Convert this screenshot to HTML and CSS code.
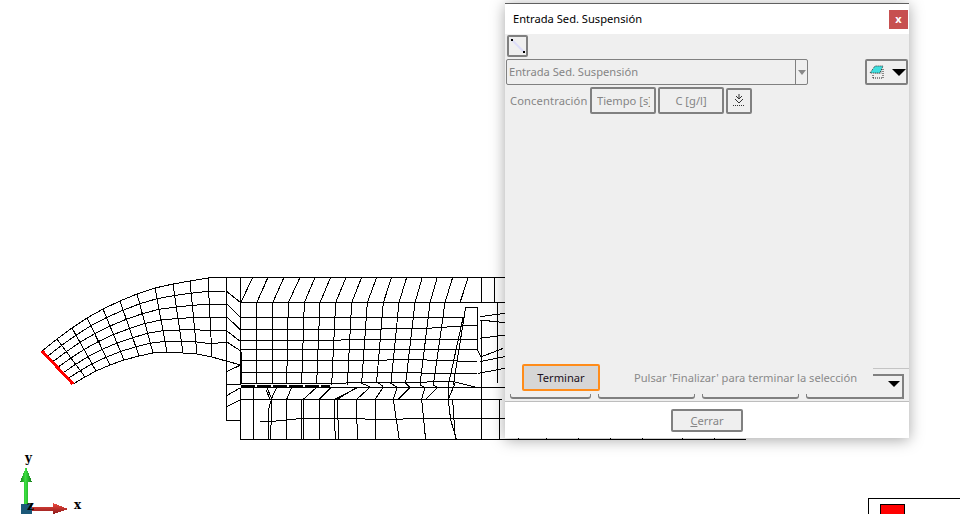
FILE: index.html
```html
<!DOCTYPE html>
<html lang="en">

<head>
    <meta charset="UTF-8">
    <title>Entrada Sed. Suspensión</title>
    <link rel="stylesheet" href="styles.css">
</head>

<body>
    <!-- Mesh viewport -->
    <svg class="viewport" width="960" height="514" viewBox="0 0 960 514">
        <defs>
            <linearGradient id="greenShade" x1="0" y1="0" x2="1" y2="0">
                <stop offset="0" stop-color="#127a18" />
                <stop offset=".45" stop-color="#3be03f" />
                <stop offset="1" stop-color="#127a18" />
            </linearGradient>
            <linearGradient id="redShade" x1="0" y1="0" x2="0" y2="1">
                <stop offset="0" stop-color="#f04a40" />
                <stop offset="1" stop-color="#8c1a1a" />
            </linearGradient>
        </defs>

        <!-- Curved inlet -->
        <g class="mesh">
            <path d="M42 351L57 339 72 328 87 318 103 309 120 301 137 294 155 288 173 284 190 281 208 278 227 277" />
            <path d="M47.2 356.5L61.7 345.3 76 335.2 90.8 325.8 106.5 317.5 123.2 310.2 139.7 303.8 157 298.7 174.7 295.5 191.2 293.2 208.7 291.2 226.5 291" />
            <path d="M52.3 362L66.3 351.7 80 342.3 94.7 333.7 110 326 126.3 319.3 142.3 313.7 159 309.3 176.3 307 192.3 305.3 209.3 304.3 226.5 304.5" />
            <path d="M57.5 367.5L71 358 84 349.5 98.5 341.5 113.5 334.5 129.5 328.5 145 323.5 161 320 178 318.5 193.5 317.5 210 317.5 226.5 317" />
            <path d="M62.7 373L75.7 364.3 88 356.7 102.3 349.3 117 343 132.7 337.7 147.7 333.3 163 330.7 179.7 330 194.7 329.7 210.7 330.7 226 331" />
            <path d="M67.8 378.5L80.3 370.7 92 363.8 106.2 357.2 120.5 351.5 135.8 346.8 150.3 343.2 165 341.3 181.3 341.5 195.8 341.8 211.3 343.8 226 342" />
            <path d="M73 384L85 377 96 371 110 365 124 360 139 356 153 353 167 352 183 353 197 354 212 357 226 361 241 365" />
            <path d="M57 339L85 377M72 328L96 371M87 318L110 365M103 309L124 360M120 301L139 356M137 294L153 353M155 288L167 352M173 284L183 353M190 281L197 354M208 278L212 357" />
        </g>
        <path class="inlet-edge" d="M42 351L73 384" />

        <!-- Left transition -->
        <g class="mesh">
            <path d="M226 277V420H240M240 388V440M253 388V440" />
            <path d="M227 291.7L240.7 302.7M227 304L240.7 317.7M227 317L240.7 330M227 331L240.7 341.7M227 342L240.7 351" />
            <path d="M226 372L240.7 365M226 384H240.7M226 396L240 388M226 407L240 400" />
            <path d="M240.7 302.7L253 277M256.7 302.7L268 277M240.7 277V384M256.7 302.7V384" />
            <path d="M240 399H272M266 390L270 399" />
        </g>
        <path class="mesh-heavy" d="M241 352V384" />
        <path class="mesh-heavy dashed" d="M241 386H330" />

        <!-- Main channel -->
        <g class="mesh" transform="translate(260 270) scale(.3333)">
            <path d="M-102 22H750M-58 98H735M-58 143H610M-58 180H170L500 175 655 165M-58 212H170L320 208 490 208 650 208" />
            <path d="M-58 240H320L450 240 650 240M-58 273H300L440 268 650 275M-58 308H300L650 310M-58 340H170L360 338 580 335 650 352M-58 352H735M-58 388H725M0 453L30 455 80 450 130 445 400 448 490 445 735 445M-58 510H735" />
            <path d="M0 75L25 22M38 98L72 22M85 98L120 22M133 98L165 22M180 98L212 22M227 98L258 22M275 98L305 22M322 98L350 22M370 98L395 22M417 98L440 22M465 98L487 22M510 98L532 22M555 98L578 22M600 98L625 22M665 22V98M705 22V98" />
            <path d="M38 98V340M85 98L80 340M133 98L125 340M180 98L170 340M227 98L215 345M275 98L262 345M322 98L305 340L330 350M370 98L350 335 370 350M417 98L393 340 412 352M465 98L437 340 450 352M510 98L480 345 495 352M555 98L520 345 533 352" />
            <path d="M610 140L565 345V388M617 112L580 345M617 112H652V240L665 265M665 150V510M712 100V340M660 140L735 130M660 150L735 158M660 205L735 195M665 260L730 235M655 310L735 295M660 275L735 260" />
            <path d="M20 352L35 385 50 352M35 385L25 420V510M35 385L32 510M80 388L95 352M130 388L170 352M178 388L213 352M225 388L295 352M232 388L290 352M290 388L330 352M345 388L370 352M400 388L412 352M415 388L450 352M485 388L495 352M497 388L533 352M565 388L585 340" />
            <path d="M80 388V510M125 388V510M132 388V510M178 388V510M222 388L226 510M232 388L236 510M288 388L293 510M345 388L348 510M400 388L418 510M485 388L497 510M565 388L572 450 590 510M578 388L586 510M720 388V510" />
        </g>

        <!-- Bottom edge left showing under the dialog -->
        <g class="mesh">
            <path d="M505 439.5H746M518 436V439M546 436V439M578 436V439M610 436V439M642 436V439M682 436V439M714 436V439" />
        </g>

        <!-- Axis triad -->
        <path d="M24 482H20L26 467 32 482H28V505H24Z" fill="url(#greenShade)" />
        <path d="M30 507H53V503L68 509 53 514V511H30Z" fill="url(#redShade)" />
        <rect class="axis-blue" x="21" y="504" width="11" height="10" />
        <text class="axis-label" x="25" y="462">y</text>
        <text class="axis-label" x="27" y="510">z</text>
        <text class="axis-label" x="74" y="509">x</text>

        <!-- Legend box -->
        <path class="legend-box" d="M868.5 514V498.5H960" />
        <rect class="legend-swatch" x="880.5" y="504.5" width="24" height="12" />
    </svg>

    <!-- Dialog window -->
    <div class="dialog">
        <div class="title-bar">
            <span>Entrada Sed. Suspensión</span>
            <div class="close-btn">x</div>
        </div>

        <div class="dialog-body">
            <div class="tool-btn line-btn">
                <svg width="17" height="18" viewBox="0 0 17 18">
                    <path d="M2 2L15 15" stroke="#dcdcf8" stroke-width="2" fill="none" />
                    <rect x="2" y="2" width="2" height="2" />
                    <rect x="14" y="14" width="2" height="2" />
                </svg>
            </div>

            <div class="combo-row">
                <div class="combo">
                    <span class="combo-text">Entrada Sed. Suspensión</span>
                    <div class="combo-arrow"></div>
                </div>
                <div class="tool-btn layer-btn">
                    <svg width="20" height="18" viewBox="0 0 20 18">
                        <path d="M5 15V11M5 15H15V6" fill="none" stroke="#222" stroke-dasharray="1 1" />
                        <path d="M6 11H14V7H10Z" fill="#ccc" />
                        <path d="M2 10L7 3H15L12 10Z" fill="#3fdede" stroke="#333" stroke-dasharray="1 1" />
                    </svg>
                    <div class="drop-arrow"></div>
                </div>
            </div>

            <div class="conc-row">
                <span class="conc-label">Concentración</span>
                <div class="head-btn head-time"><span class="head-clip">Tiempo [s]</span></div>
                <div class="head-btn head-conc">C [g/l]</div>
                <div class="tool-btn import-btn">
                    <svg width="16" height="16" viewBox="0 0 16 16">
                        <path d="M8 1V5M5 3L8 6 11 3M4 6L8 10 12 6" fill="none" stroke="#333" />
                        <path d="M2 12.5H14" stroke="#333" stroke-dasharray="1 1" />
                    </svg>
                </div>
            </div>

            <div class="select-bar">
                <div class="clipped-row">
                    <div class="clipped-btn w-81"></div>
                    <div class="clipped-btn w-97"></div>
                    <div class="clipped-btn w-97"></div>
                    <div class="clipped-btn last-btn">
                        <div class="drop-arrow"></div>
                    </div>
                </div>
                <div class="finish-row">
                    <div class="finish-btn">Terminar</div>
                    <span class="finish-msg">Pulsar 'Finalizar' para terminar la selección</span>
                </div>
            </div>
        </div>

        <div class="dialog-footer">
            <div class="close-action"><u>C</u>errar</div>
        </div>
    </div>
</body>

</html>
```

FILE: styles.css
```css
/* Global Styles */
body {
    font-family: "Noto Sans", "Open Sans", sans-serif;
    font-size: 11.15px;
    margin: 0;
    width: 960px;
    height: 514px;
    position: relative;
    overflow: hidden;
    background-color: #fff;
}

/* Mesh Viewport */
.viewport {
    position: absolute;
    top: 0;
    left: 0;
    shape-rendering: crispEdges;
}

.mesh {
    fill: none;
    stroke: #000;
    stroke-width: 1;
}

.mesh path {
    vector-effect: non-scaling-stroke;
}

.mesh-heavy {
    fill: none;
    stroke: #000;
    stroke-width: 2;
}

.dashed {
    stroke-dasharray: 14 2;
}

.inlet-edge {
    fill: none;
    stroke: #f00;
    stroke-width: 3;
}

.axis-blue {
    fill: #1c5878;
}

.axis-label {
    font-family: "DejaVu Serif", serif;
    font-size: 12px;
    font-weight: bold;
}

.legend-box {
    fill: none;
    stroke: #000;
}

.legend-swatch {
    fill: #f00;
    stroke: #000;
}

/* Dialog Window */
.dialog {
    position: absolute;
    top: 3px;
    left: 505px;
    width: 404px;
    height: 435px;
    display: flex;
    flex-direction: column;
    box-sizing: border-box;
    border-top: 1px solid #606060;
    background-color: #fff;
    box-shadow: 0 2px 14px rgba(0, 0, 0, 0.35);
}

.title-bar {
    height: 30px;
    flex: none;
    display: flex;
    align-items: center;
    justify-content: space-between;
    padding: 0 1px 0 8px;
    color: #000;
}

.title-bar span {
    margin-top: -2px;
}

.close-btn {
    width: 19px;
    height: 19px;
    background-color: #c75050;
    color: #fff;
    font-size: 11px;
    font-weight: bold;
    line-height: 17px;
    text-align: center;
}

.dialog-body {
    flex: 1;
    display: flex;
    flex-direction: column;
    background-color: #efefef;
    border-bottom: 1px solid #bdbdbd;
    color: #858585;
}

/* Tool Buttons */
.tool-btn {
    box-sizing: border-box;
    border: 2px solid #808080;
    border-radius: 2px;
    display: flex;
    align-items: center;
    justify-content: center;
}

.line-btn {
    width: 21px;
    height: 22px;
    margin: 1px 0 0 2px;
}

.layer-btn {
    width: 43px;
    height: 26px;
    gap: 4px;
}

.import-btn {
    width: 26px;
    height: 26px;
    margin-left: 2px;
}

.drop-arrow {
    width: 0;
    height: 0;
    border-left: 7px solid transparent;
    border-right: 7px solid transparent;
    border-top: 7px solid #000;
}

/* Combo Row */
.combo-row {
    display: flex;
    justify-content: space-between;
    margin: 2px 1px 0 1px;
}

.combo {
    width: 302px;
    height: 26px;
    box-sizing: border-box;
    border: 1px solid #808080;
    border-radius: 2px;
    display: flex;
    align-items: center;
    justify-content: space-between;
    padding-left: 2px;
}

.combo-text {
    margin-top: -2px;
}

.combo-arrow {
    width: 11px;
    height: 24px;
    border-left: 1px solid #808080;
    position: relative;
}

.combo-arrow::after {
    content: "";
    position: absolute;
    top: 10px;
    left: 2px;
    border-left: 4px solid transparent;
    border-right: 4px solid transparent;
    border-top: 5px solid #888;
}

/* Concentration Row */
.conc-row {
    display: flex;
    align-items: center;
    margin: 2px 0 0 5px;
}

.conc-label {
    width: 80px;
    letter-spacing: 0.14px;
}

.head-btn {
    box-sizing: border-box;
    height: 27px;
    border: 2px solid #808080;
    border-radius: 2px;
    display: flex;
    align-items: center;
    justify-content: center;
    white-space: nowrap;
}

.head-time {
    width: 66px;
    justify-content: flex-start;
    padding-left: 5px;
}

.head-clip {
    width: 53px;
    overflow: hidden;
}

.head-conc {
    width: 66px;
    margin-left: 2px;
}

/* Selection Bar */
.select-bar {
    margin-top: auto;
    height: 35px;
    position: relative;
    margin-bottom: 2px;
}

.clipped-row {
    position: absolute;
    right: 5px;
    bottom: 0;
    left: 5px;
    display: flex;
    gap: 7px;
    height: 29px;
}

.clipped-btn {
    box-sizing: border-box;
    border-bottom: 2px solid #808080;
    border-left: 1px solid #808080;
    border-right: 1px solid #808080;
    border-radius: 0 0 3px 3px;
    height: 5px;
    margin-top: auto;
}

.w-81 {
    width: 81px;
}

.w-97 {
    width: 97px;
}

.last-btn {
    flex: 1;
    height: 5px;
    position: relative;
}

.last-btn .drop-arrow {
    position: absolute;
    right: 3px;
    bottom: 10px;
    border-left-width: 6px;
    border-right-width: 6px;
    border-top-width: 6px;
}

.last-btn::after {
    content: "";
    position: absolute;
    right: -1px;
    bottom: -2px;
    width: 31px;
    height: 25px;
    box-sizing: border-box;
    border-top: 2px solid #808080;
    border-right: 2px solid #808080;
}

.select-bar::before {
    content: "";
    position: absolute;
    top: 4px;
    right: 0;
    width: 36px;
    border-top: 1px solid #c4c4c4;
}

/* Finish overlay */
.finish-row {
    position: absolute;
    top: 0;
    left: 17px;
    display: flex;
    align-items: center;
}

.finish-btn {
    box-sizing: border-box;
    width: 78px;
    height: 27px;
    border: 2px solid #ff8c1a;
    border-radius: 2px;
    background-color: #d6d6d6;
    color: #1a1020;
    line-height: 23px;
    text-align: center;
}

.finish-msg {
    margin-left: 34px;
    color: #8a8a8a;
}

/* Footer */
.dialog-footer {
    height: 36px;
    flex: none;
    display: flex;
    align-items: center;
    justify-content: center;
    background-color: #fff;
}

.close-action {
    box-sizing: border-box;
    width: 72px;
    height: 23px;
    border: 2px solid #808080;
    border-radius: 2px;
    background-color: #efefef;
    color: #858585;
    line-height: 19px;
    text-align: center;
}
```
